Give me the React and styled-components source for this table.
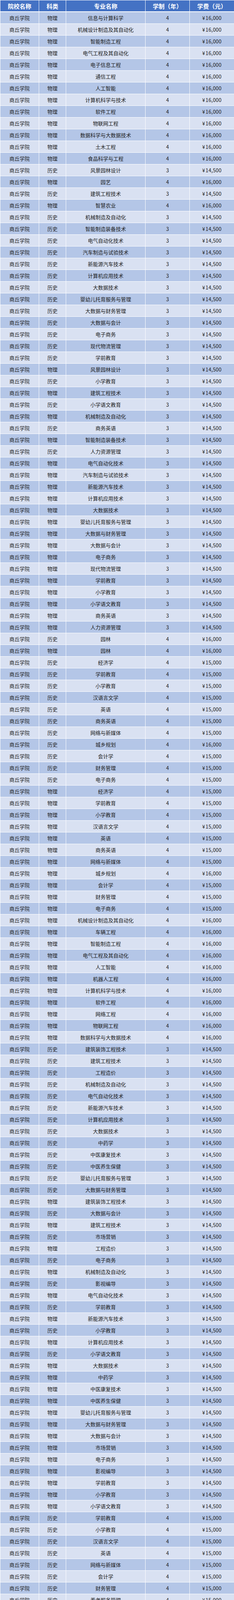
import React from "react";
import styled, { createGlobalStyle } from "styled-components";

const GlobalStyle = createGlobalStyle`
  html, body {
    margin: 0;
    padding: 0;
    background: #ffffff;
  }
  body {
    font-family: "Noto Sans CJK SC", "Noto Sans", "Liberation Sans", sans-serif;
    line-height: 1;
  }
`;

const W = "物理";
const L = "历史";

const group = (subject, years, fee, majors) =>
  majors.map((m) => ({ subject, major: m, years, fee }));

const mix = (years, fee, pairs) =>
  pairs.map(([subject, major]) => ({ subject, major, years, fee }));

const DATA = [
  ...group(W, 4, "16,000", [
    "信息与计算科学",
    "机械设计制造及其自动化",
    "智能制造工程",
    "电气工程及其自动化",
    "电子信息工程",
    "通信工程",
    "人工智能",
    "计算机科学与技术",
    "软件工程",
    "物联网工程",
    "数据科学与大数据技术",
    "土木工程",
    "食品科学与工程",
  ]),
  ...group(L, 3, "14,500", ["风景园林设计"]),
  ...group(W, 4, "16,000", ["园艺"]),
  ...group(L, 3, "14,500", ["建筑工程技术"]),
  ...group(W, 4, "16,000", ["智慧农业"]),
  ...mix(3, "14,500", [
    [L, "机械制造及自动化"],
    [L, "智能制造装备技术"],
    [L, "电气自动化技术"],
    [L, "汽车制造与试验技术"],
    [L, "新能源汽车技术"],
    [L, "计算机应用技术"],
    [L, "大数据技术"],
    [L, "婴幼儿托育服务与管理"],
    [L, "大数据与财务管理"],
    [L, "大数据与会计"],
    [L, "电子商务"],
    [L, "现代物流管理"],
    [L, "学前教育"],
    [W, "风景园林设计"],
    [L, "小学教育"],
    [W, "建筑工程技术"],
    [L, "小学语文教育"],
    [W, "机械制造及自动化"],
    [L, "商务英语"],
    [W, "智能制造装备技术"],
    [L, "人力资源管理"],
  ]),
  ...group(W, 3, "14,500", [
    "电气自动化技术",
    "汽车制造与试验技术",
    "新能源汽车技术",
    "计算机应用技术",
    "大数据技术",
    "婴幼儿托育服务与管理",
    "大数据与财务管理",
    "大数据与会计",
    "电子商务",
    "现代物流管理",
    "学前教育",
    "小学教育",
    "小学语文教育",
    "商务英语",
    "人力资源管理",
  ]),
  ...group(L, 4, "16,000", ["园林"]),
  ...group(W, 4, "16,000", ["园林"]),
  ...group(L, 4, "15,000", [
    "经济学",
    "学前教育",
    "小学教育",
    "汉语言文学",
    "英语",
    "商务英语",
    "网络与新媒体",
  ]),
  ...group(L, 4, "16,000", ["城乡规划"]),
  ...group(L, 4, "15,000", ["会计学", "财务管理", "电子商务"]),
  ...group(W, 4, "15,000", [
    "经济学",
    "学前教育",
    "小学教育",
    "汉语言文学",
    "英语",
    "商务英语",
    "网络与新媒体",
  ]),
  ...group(W, 4, "16,000", ["城乡规划"]),
  ...group(W, 4, "15,000", ["会计学", "财务管理", "电子商务"]),
  ...group(W, 4, "16,000", [
    "机械设计制造及其自动化",
    "车辆工程",
    "智能制造工程",
    "电气工程及其自动化",
    "人工智能",
    "机器人工程",
    "计算机科学与技术",
    "软件工程",
    "网络工程",
    "物联网工程",
    "数据科学与大数据技术",
  ]),
  ...group(L, 3, "14,500", [
    "建筑装饰工程技术",
    "建筑工程技术",
    "工程造价",
    "机械制造及自动化",
    "电气自动化技术",
    "新能源汽车技术",
    "计算机应用技术",
    "大数据技术",
    "中药学",
    "中医康复技术",
    "中医养生保健",
    "婴幼儿托育服务与管理",
    "大数据与财务管理",
  ]),
  ...mix(3, "14,500", [
    [W, "建筑装饰工程技术"],
    [L, "大数据与会计"],
    [W, "建筑工程技术"],
    [L, "市场营销"],
    [W, "工程造价"],
    [L, "电子商务"],
    [W, "机械制造及自动化"],
    [L, "影视编导"],
    [W, "电气自动化技术"],
    [L, "学前教育"],
    [W, "新能源汽车技术"],
    [L, "小学教育"],
    [W, "计算机应用技术"],
    [L, "小学语文教育"],
  ]),
  ...group(W, 3, "14,500", [
    "大数据技术",
    "中药学",
    "中医康复技术",
    "中医养生保健",
    "婴幼儿托育服务与管理",
    "大数据与财务管理",
    "大数据与会计",
    "市场营销",
    "电子商务",
    "影视编导",
    "学前教育",
    "小学教育",
    "小学语文教育",
  ]),
  ...group(L, 4, "15,000", [
    "学前教育",
    "小学教育",
    "汉语言文学",
    "英语",
    "网络与新媒体",
    "会计学",
    "财务管理",
    "养老服务管理",
    "物流管理",
    "电子商务",
  ]),
  ...group(W, 4, "15,000", [
    "学前教育",
    "小学教育",
    "汉语言文学",
    "英语",
    "网络与新媒体",
    "会计学",
    "财务管理",
    "养老服务管理",
    "物流管理",
    "电子商务",
    "数字经济",
    "工程造价",
  ]),
  ...group(L, 4, "15,000", ["广播电视编导"]),
  ...group(W, 4, "15,000", ["广播电视编导"]),
];

const Table = styled.div`
  width: 598px;
  box-sizing: border-box;
  padding: 1px 0 1px 1px;
  display: flex;
  flex-direction: column;
  gap: 1px;
  background: #ffffff;
`;

const Grid = styled.div`
  display: grid;
  grid-template-columns: 98px 68px 202px 112px 1fr;
  grid-template-rows: 100%;
  column-gap: 1px;
  flex: none;
  overflow: hidden;
`;

const HeaderRow = styled(Grid)`
  height: 28px;
  margin-bottom: 1px;
`;

const Row = styled(Grid)`
  height: 29px;
`;

const HeadCell = styled.div`
  background: #4472c4;
  color: #ffffff;
  font-weight: 700;
  font-size: 15px;
  line-height: 1;
  display: flex;
  align-items: center;
  justify-content: center;
  white-space: nowrap;
  overflow: hidden;
  min-height: 0;
`;

const Cell = styled.div`
  background: ${(p) => (p.$odd ? "#b4c6e7" : "#d9e1f2")};
  color: #1c1c1c;
  font-size: 13px;
  line-height: 1;
  display: flex;
  align-items: center;
  justify-content: center;
  white-space: nowrap;
  overflow: hidden;
  min-height: 0;
`;

const Fee = styled(Cell)`
  letter-spacing: 0.2px;
`;

const Yen = styled.span`
  margin-right: 1px;
`;

export default function App() {
  return (
    <>
      <GlobalStyle />
      <Table>
        <HeaderRow>
          <HeadCell>院校名称</HeadCell>
          <HeadCell>科类</HeadCell>
          <HeadCell>专业名称</HeadCell>
          <HeadCell>学制（年）</HeadCell>
          <HeadCell>学费（元）</HeadCell>
        </HeaderRow>
        {DATA.map((r, i) => {
          const odd = i % 2 === 0;
          return (
            <Row key={i}>
              <Cell $odd={odd}>商丘学院</Cell>
              <Cell $odd={odd}>{r.subject}</Cell>
              <Cell $odd={odd}>{r.major}</Cell>
              <Cell $odd={odd}>{r.years}</Cell>
              <Fee $odd={odd}>
                <Yen>¥</Yen>
                {r.fee}
              </Fee>
            </Row>
          );
        })}
      </Table>
    </>
  );
}
